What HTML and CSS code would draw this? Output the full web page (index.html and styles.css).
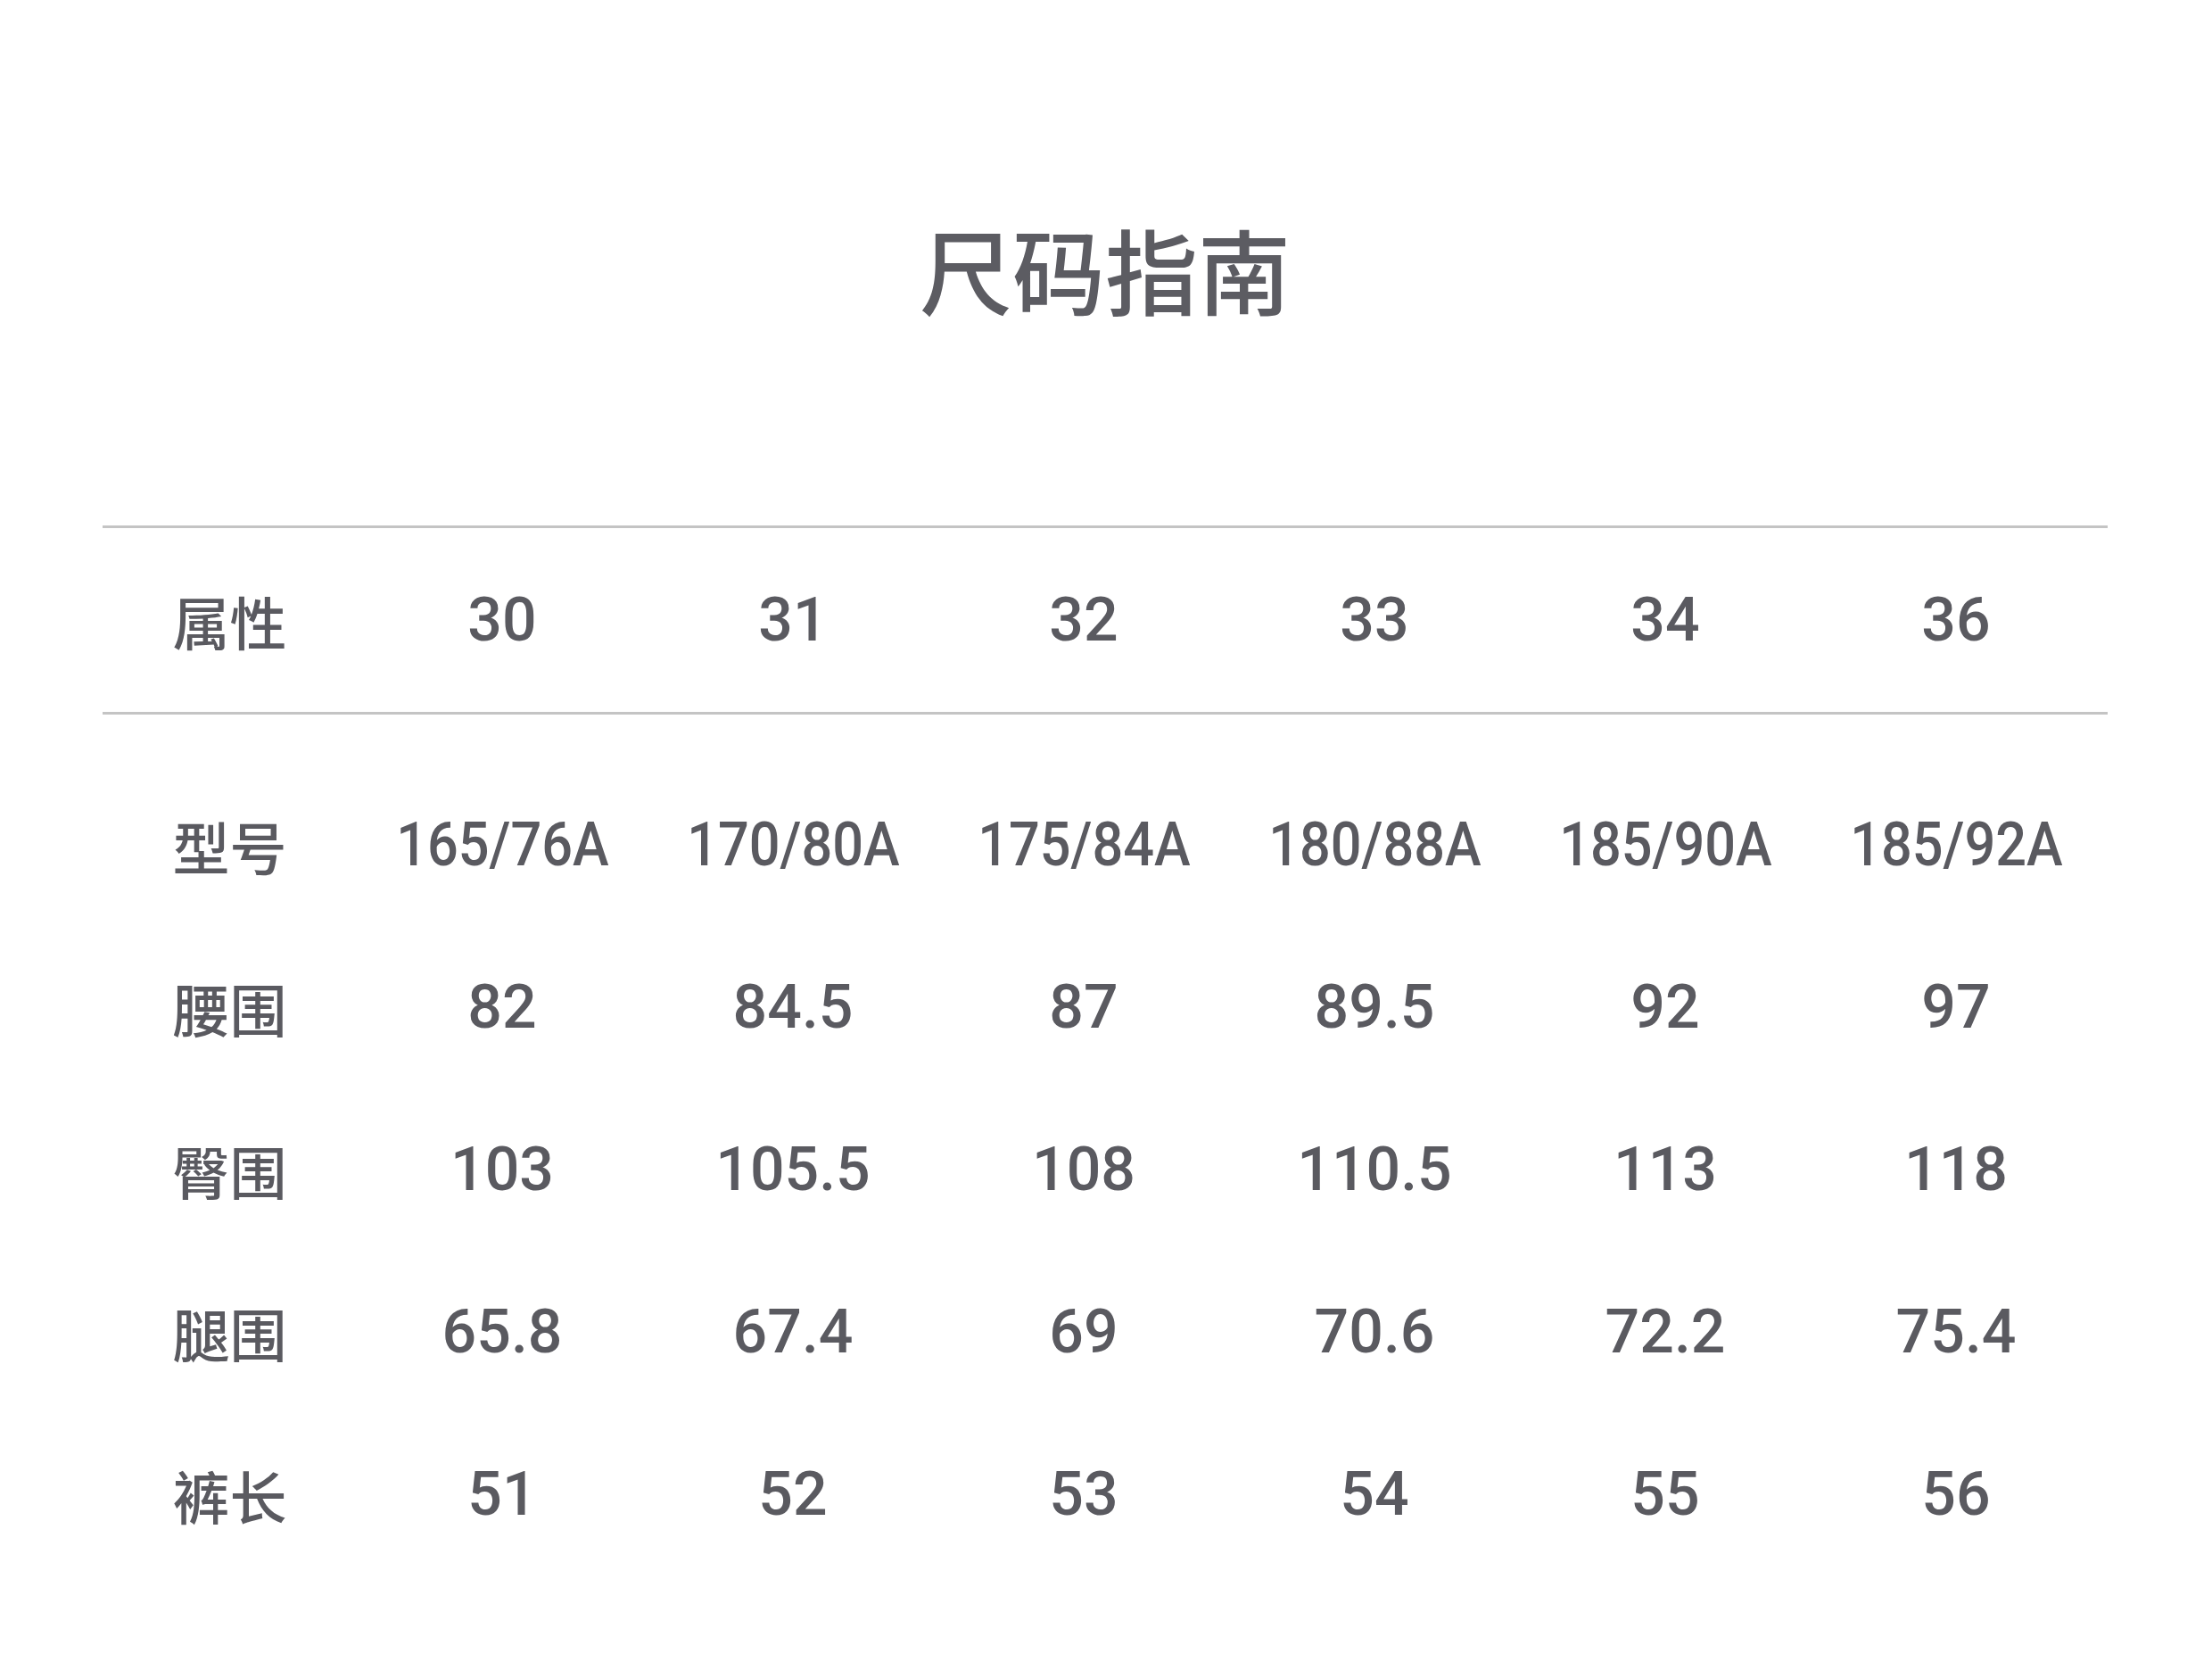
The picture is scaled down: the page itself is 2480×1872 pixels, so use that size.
FILE: index.html
```html
<!DOCTYPE html>
<html lang="zh-CN">
<head>
<meta charset="utf-8">
<title>尺码指南</title>
<link rel="stylesheet" href="styles.css">
</head>
<body>
<div class="page">
  <h1 class="title">尺码指南</h1>
  <div class="table">
    <div class="row head">
      <div class="cell label">属性</div>
      <div class="cell">30</div>
      <div class="cell">31</div>
      <div class="cell">32</div>
      <div class="cell">33</div>
      <div class="cell">34</div>
      <div class="cell">36</div>
    </div>
    <div class="body">
      <div class="row">
        <div class="cell label">型号</div>
        <div class="cell"><span class="narrow">165/76A</span></div>
        <div class="cell"><span class="narrow">170/80A</span></div>
        <div class="cell"><span class="narrow">175/84A</span></div>
        <div class="cell"><span class="narrow">180/88A</span></div>
        <div class="cell"><span class="narrow">185/90A</span></div>
        <div class="cell"><span class="narrow">185/92A</span></div>
      </div>
      <div class="row">
        <div class="cell label">腰围</div>
        <div class="cell">82</div>
        <div class="cell">84.5</div>
        <div class="cell">87</div>
        <div class="cell">89.5</div>
        <div class="cell">92</div>
        <div class="cell">97</div>
      </div>
      <div class="row">
        <div class="cell label">臀围</div>
        <div class="cell">103</div>
        <div class="cell">105.5</div>
        <div class="cell">108</div>
        <div class="cell">110.5</div>
        <div class="cell">113</div>
        <div class="cell">118</div>
      </div>
      <div class="row">
        <div class="cell label">腿围</div>
        <div class="cell">65.8</div>
        <div class="cell">67.4</div>
        <div class="cell">69</div>
        <div class="cell">70.6</div>
        <div class="cell">72.2</div>
        <div class="cell">75.4</div>
      </div>
      <div class="row">
        <div class="cell label">裤长</div>
        <div class="cell">51</div>
        <div class="cell">52</div>
        <div class="cell">53</div>
        <div class="cell">54</div>
        <div class="cell">55</div>
        <div class="cell">56</div>
      </div>
    </div>
  </div>
</div>
</body>
</html>
```

FILE: styles.css
```css
html, body {
  margin: 0;
  padding: 0;
  background: #ffffff;
}

.page {
  width: 2480px;
  height: 1872px;
  box-sizing: border-box;
  padding: 0 117px 0 115px;
  font-family: Roboto, "Liberation Sans", "Noto Sans CJK SC", sans-serif;
  color: #5a5a60;
}

.title {
  margin: 0;
  padding-top: 249px;
  font-family: "Noto Sans CJK SC", sans-serif;
  font-weight: 500;
  font-size: 104px;
  line-height: 1;
  text-align: center;
  color: #5c5c62;
}

.table {
  margin-top: 236px;
}

.row {
  display: grid;
  grid-template-columns: 285px repeat(6, 326px);
  align-items: center;
}

.head {
  height: 212px;
  box-sizing: border-box;
  border-top: 3px solid #c4c4c4;
  border-bottom: 3px solid #c4c4c4;
}

.body {
  padding-top: 55px;
}

.body .row {
  height: 182px;
}

.cell {
  text-align: center;
  font-size: 68px;
  font-weight: 500;
  line-height: 1;
  white-space: nowrap;
}

.label {
  font-family: "Noto Sans CJK SC", sans-serif;
  font-size: 64px;
}

.narrow {
  display: inline-block;
  transform: scaleX(0.9);
}
```
